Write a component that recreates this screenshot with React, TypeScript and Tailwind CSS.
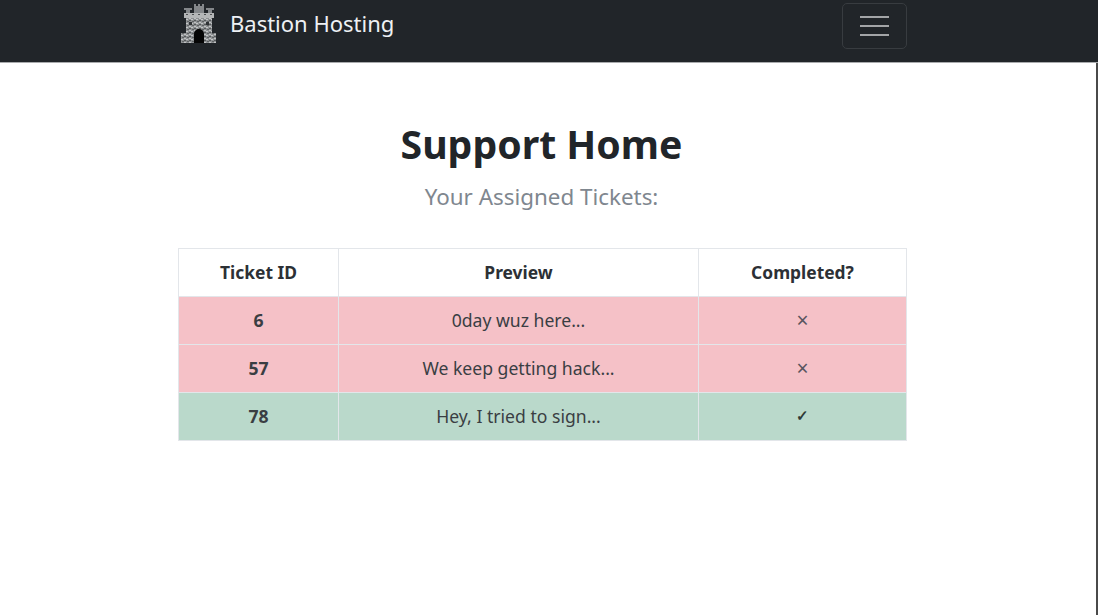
const font = { fontFamily: '"Noto Sans", "Open Sans", sans-serif' };

type Ticket = { id: number; preview: string; done: boolean };

const tickets: Ticket[] = [
  { id: 6, preview: "0day wuz here...", done: false },
  { id: 57, preview: "We keep getting hack...", done: false },
  { id: 78, preview: "Hey, I tried to sign...", done: true },
];

function Castle() {
  return (
    <svg width="36" height="40" viewBox="0 0 36 40" className="block">
      <defs>
        <pattern id="stone" width="5" height="4" patternUnits="userSpaceOnUse">
          <rect width="5" height="4" fill="#8d9092" />
          <rect x="0" y="0" width="2" height="1" fill="#c3c5c6" />
          <rect x="3" y="1" width="2" height="1" fill="#55585a" />
          <rect x="1" y="2" width="2" height="1" fill="#5f6264" />
          <rect x="3" y="3" width="2" height="1" fill="#bfc1c2" />
        </pattern>
      </defs>
      {/* towers */}
      <path d="M13 1h2v2h2V1h2v2h2V1h2v9H13z" fill="#84878a" />
      <path d="M3 5h8v2H9v3H5V7H3zM25 5h8v2h-2v3h-4V7h-2z" fill="#84878a" />
      {/* battlement */}
      <path d="M3 10h30v5H3z" fill="#b4b6b7" />
      <path d="M5 11h2v1H5zM11 11h2v1h-2zM17 11h2v1h-2zM23 11h2v1h-2zM29 11h2v1h-2z" fill="#4b4e50" />
      {/* walls */}
      <path d="M5 15h26v16H5z" fill="url(#stone)" />
      <path d="M0 30h35v10H0z" fill="url(#stone)" />
      <path d="M8 19h3v3H8zM25 19h3v3h-3z" fill="#303336" />
      {/* gate */}
      <path d="M13 40V31a5 5 0 0 1 10 0v9z" fill="#050505" />
    </svg>
  );
}

export default function App() {
  return (
    <div className="flex min-h-[615px] w-[1098px] flex-col overflow-hidden bg-white" style={font}>
      <nav className="h-[63px] border-b border-[#a9abad] bg-[#212529]">
        <div className="ml-[178px] flex h-[62px] w-[729px] items-start">
          <div className="ml-[3px] mt-[3px]">
            <Castle />
          </div>
          <span className="ml-[13px] mt-[7px] text-[22px] leading-[32px] text-[#eef1f4]">Bastion Hosting</span>
          <button className="ml-auto mt-[3px] flex h-[46px] w-[65px] flex-col items-center justify-center gap-[7px] rounded-[5px] border border-[#383c40]">
            <span className="h-[2px] w-[29px] bg-[#a3a5a7]" />
            <span className="h-[2px] w-[29px] bg-[#a3a5a7]" />
            <span className="h-[2px] w-[29px] bg-[#a3a5a7]" />
          </button>
        </div>
      </nav>

      <div className="flex flex-1 border-r-2 border-[#4a4a4a]">
        <main className="w-[1083px] pt-[55px] text-center">
          <h1 className="text-[39.2px] leading-[52px] font-bold text-[#212529]">Support Home</h1>
          <p className="mt-[11px] text-[22.4px] leading-[32px] text-[#7f878f]">Your Assigned Tickets:</p>
          <table className="mt-[35px] ml-[178px] w-[728px] table-fixed border-collapse text-[17.6px] text-[#3a3e43]">
            <colgroup>
              <col className="w-[160px]" />
              <col className="w-[360px]" />
              <col className="w-[208px]" />
            </colgroup>
            <thead>
              <tr className="h-[48px] bg-white text-[17.4px] text-[#2c3035]">
                <th className="border border-[#e3e6ea] font-bold">Ticket ID</th>
                <th className="border border-[#e3e6ea] font-bold">Preview</th>
                <th className="border border-[#e3e6ea] font-bold">Completed?</th>
              </tr>
            </thead>
            <tbody>
              {tickets.map((t) => (
                <tr key={t.id} className={t.done ? "h-[48px] bg-[#bad9cb]" : "h-[48px] bg-[#f5c1c7]"}>
                  <td className="border border-[#e3e6ea] font-bold">{t.id}</td>
                  <td className="border border-[#e3e6ea]">{t.preview}</td>
                  <td className="border border-[#e3e6ea]">
                    {t.done ? (
                      <span className="block pb-[3px] text-[15px] leading-[20px] font-bold text-[#2f3a36]">✓</span>
                    ) : (
                      <span className="block pb-[1px] text-[21px] leading-[20px] text-[#5a5560]">×</span>
                    )}
                  </td>
                </tr>
              ))}
            </tbody>
          </table>
        </main>
      </div>
    </div>
  );
}
